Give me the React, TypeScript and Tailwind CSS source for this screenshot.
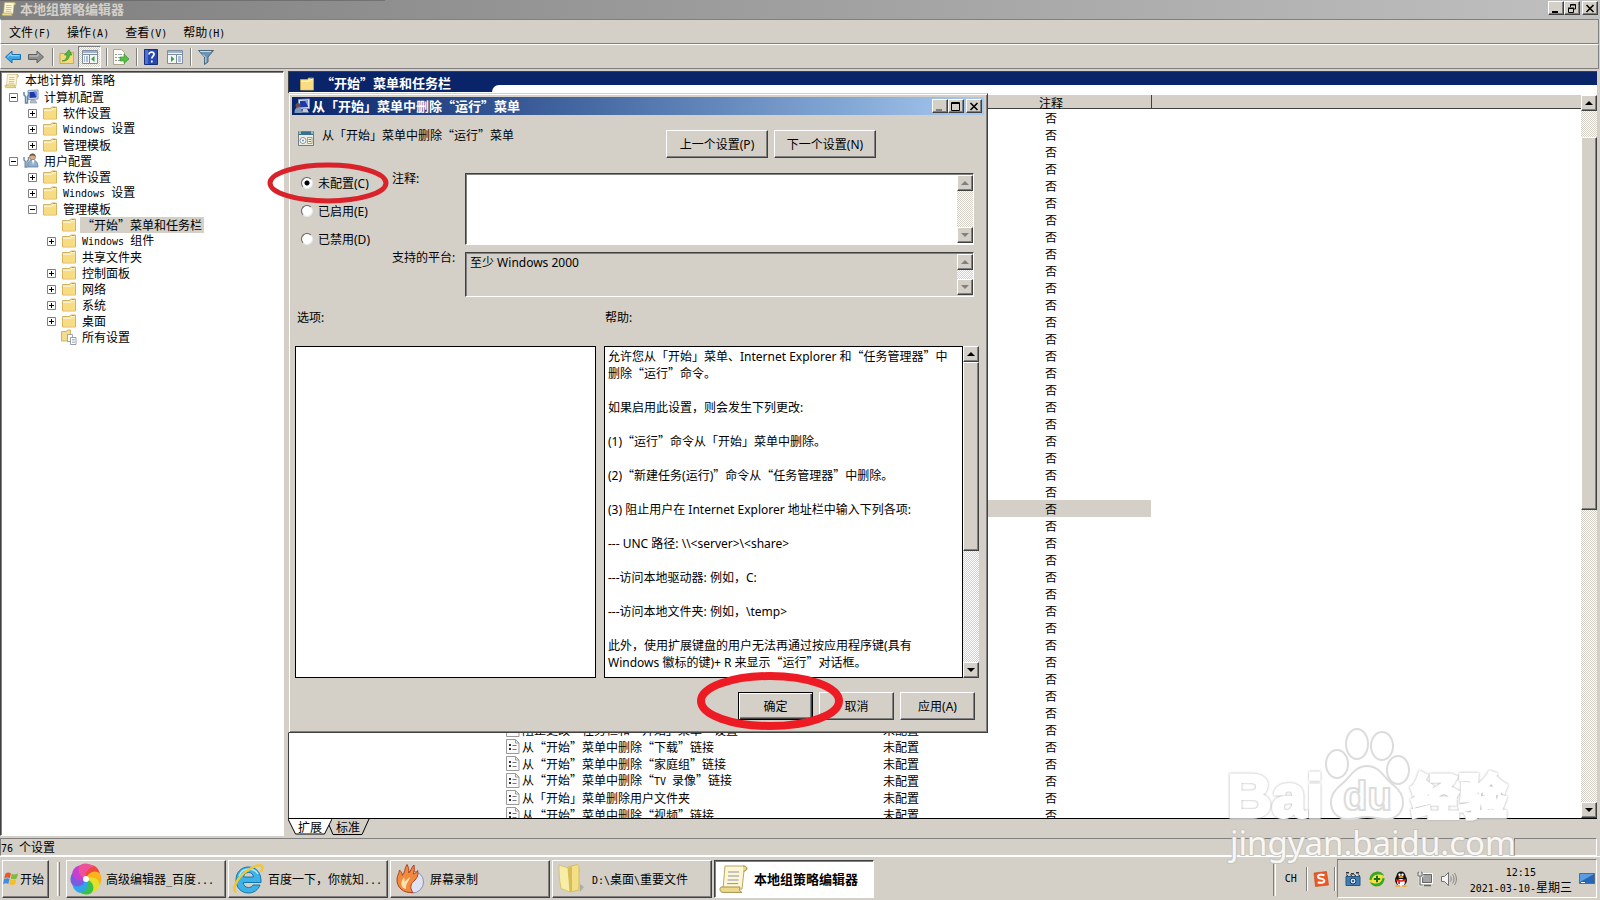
import { useState } from 'react';
import type { ReactNode } from 'react';

interface TreeItem {
  label: string;
  level: number;
  icon: ReactNode;
  state?: 'open' | 'closed';
  selected?: boolean;
}

interface SettingRow {
  name: string;
  status: string;
  comment: string;
}

const raised =
  'bg-[#d4d0c8] border border-t-white border-l-white border-r-[#404040] border-b-[#404040] shadow-[inset_-1px_-1px_0_#808080]';
const sunken =
  'border border-t-[#404040] border-l-[#404040] border-r-white border-b-white shadow-[inset_1px_1px_0_#808080]';
const track =
  'bg-[repeating-conic-gradient(#ffffff_0_25%,#d4d0c8_0_50%)] bg-[length:2px_2px]';

// Latin runs get their own face so the full-width quotes stay in the CJK font
function Mono({ text }: { text: string }) {
  return (
    <>
      {text.split(/([ -~]+)/).map((part, i) =>
        i % 2 ? (
          <span key={i} className="whitespace-pre text-[10px] [font-family:'DejaVu_Sans_Mono',monospace]">
            {part}
          </span>
        ) : (
          part
        )
      )}
    </>
  );
}

function Ui({ text }: { text: string }) {
  return (
    <>
      {text.split(/([ -~]+)/).map((part, i) =>
        i % 2 ? (
          <span key={i} className="whitespace-pre [font-family:'Noto_Sans',sans-serif]">
            {part}
          </span>
        ) : (
          part
        )
      )}
    </>
  );
}

function FolderIcon() {
  return (
    <svg viewBox="0 0 16 16" className="size-4 shrink-0">
      <path d="M1.500 3.500h7l1-1.500h5v12h-13z" fill="#fbe28c" stroke="#c9a648" strokeWidth=".8" />
      <path d="M2 6h12v7.500H2z" fill="#f8dc84" />
      <path d="M2 5.500h7.500l1.500-2h3" fill="none" stroke="#fff6cf" />
      <path d="M11 2.500h2.500" stroke="#8f9aa8" />
    </svg>
  );
}

function ScrollIcon({ className = 'size-4' }: { className?: string }) {
  return (
    <svg viewBox="0 0 16 16" className={`${className} shrink-0`}>
      <path d="M3.500 1.500h9.500c2 0 2 2.500 0 2.500L12 13H2.500z" fill="#fdf6d4" stroke="#b9a868" strokeWidth=".5" />
      <path d="M1.500 12h9.500c-.5 1.500 0 2.600 1 2.700H2.500c-1.600 0-1.900-2-1-2.700z" fill="#ecd98c" stroke="#a8944a" strokeWidth=".5" />
      <path d="M12.500 1.600c2.500-.3 2.200 2.600.2 2.400" fill="#ecd98c" stroke="#a8944a" strokeWidth=".5" />
      <path d="M5 4.500h5.500M5 6.500h5.500M4.800 8.500h5.500M4.600 10.300h5.500" stroke="#8d93a5" strokeWidth=".5" />
    </svg>
  );
}

function ComputerIcon() {
  return (
    <svg viewBox="0 0 16 16" className="size-4 shrink-0">
      <path d="M5 1.500l10-.5v9l-10 .5z" fill="#dbe3f2" stroke="#7182ab" strokeWidth=".8" />
      <path d="M6.500 3l7-.4v6l-7 .4z" fill="#1d38a8" />
      <path d="M11 3l2.500-.3v5.900z" fill="#6c8fe8" />
      <path d="M8 11h4l2 3H7z" fill="#b8c0cf" stroke="#77808f" strokeWidth=".5" />
      <path d="M1 3v3l1.500 1.500V14h2V7.500L6 6V3" fill="none" stroke="#5f87a8" strokeWidth="1.500" />
    </svg>
  );
}

function RemoteIcon() {
  return (
    <svg viewBox="0 0 16 16" className="size-4 shrink-0">
      <path d="M4.500 1.500L15.500 1v9.500l-11 .5z" fill="#dbe3f2" stroke="#8e9dc4" strokeWidth=".8" />
      <path d="M6 3l8-.5V9l-8 .5z" fill="#1d38a8" />
      <path d="M11 2.700l3-.2v6z" fill="#7d9cf0" />
      <path d="M9 11h4l2 3.500H8z" fill="#c6cbd6" />
      <circle cx="4" cy="7.500" r="2.500" fill="#6b4d4a" />
      <path d="M.5 15c0-4 1.500-5.500 3.700-5.500S8 11 8 15z" fill="#7f97b8" />
    </svg>
  );
}

function UserIcon() {
  return (
    <svg viewBox="0 0 16 16" className="size-4 shrink-0">
      <circle cx="9.500" cy="4" r="3" fill="#d7b08b" stroke="#7a6552" strokeWidth=".6" />
      <path d="M6.500 3.500c0-4 6.500-4 6 0-2-1.500-4-1.500-6 0z" fill="#6b5a4d" />
      <path d="M5 14c0-6 1.500-7 4.500-7s5.500 2 5.500 7z" fill="#8fb0d0" stroke="#55718f" strokeWidth=".7" />
      <path d="M9 7l1 5 1.500-5z" fill="#fff" />
      <path d="M1 4v3l1.200 1.300V14h1.800V8.300L5.500 7V4" fill="none" stroke="#6c8ea5" strokeWidth="1.400" />
    </svg>
  );
}

function AllSettingsIcon() {
  return (
    <svg viewBox="0 0 16 16" className="size-4 shrink-0">
      <path d="M.5 2.500h5l1-1.500h3v11h-9z" fill="#f5dc8c" stroke="#c9a648" strokeWidth=".8" />
      <path d="M6.500 5.500h5v7h-5z" fill="#fff" stroke="#8a93a0" strokeWidth=".8" />
      <path d="M9.500 8.500h5.500v7H9.500z" fill="#fff" stroke="#7d8794" strokeWidth=".8" />
      <path d="M11 10.500h2.800M11 12h2.800M11 13.500h2.800" stroke="#8fa0b5" strokeWidth=".7" />
    </svg>
  );
}

function WindowIcon({ flip = false }: { flip?: boolean }) {
  return (
    <svg viewBox="0 0 16 16" className="size-4">
      <path d="M.5 1.500h15v13H.5z" fill="#f4f6f8" stroke="#7b8ca3" />
      <path d="M1 2h14v2H1z" fill="#9fb2c8" />
      <path d="M1 5.500h14" stroke="#7b8ca3" />
      {flip ? (
        <>
          <path d="M9.500 6v8" stroke="#7b8ca3" />
          <path d="M4 7l3.500 3L4 13z" fill="#3f9f40" />
          <path d="M11 8h3M11 10h3M11 12h3" stroke="#6b88b5" />
        </>
      ) : (
        <>
          <path d="M7.500 6v8" stroke="#7b8ca3" />
          <path d="M12.500 7L9 10l3.500 3z" fill="#3f9f40" />
          <path d="M2 8h1M4 8h2M2 10h1M4 10h2M2 12h1M4 12h2" stroke="#5d82bc" />
        </>
      )}
    </svg>
  );
}

function DocIcon() {
  return (
    <svg viewBox="0 0 14 15" className="h-[15px] w-[14px] shrink-0">
      <path d="M.5.5h9l3.500 3.500v10.500H.5z" fill="#fafafa" stroke="#9a9a9a" />
      <path d="M9.500.5v3.500H13" fill="none" stroke="#9a9a9a" />
      <path d="M3 5h2v2H3zM3 9h2v2H3z" fill="#333" />
      <path d="M6.500 6.500h4M6.500 10.500h4" stroke="#777" />
    </svg>
  );
}

function PolicyIcon() {
  return (
    <svg viewBox="0 0 16 16" className="size-4 shrink-0">
      <path d="M.5 1.500h15v14H.5z" fill="#e9ede6" stroke="#6f7d86" />
      <path d="M1 2h14v3H1z" fill="#3b6f92" />
      <path d="M1 1h2v3H1zM13 1h2v3h-2z" fill="#88c4a8" />
      <circle cx="5" cy="10.500" r="3" fill="#fff" stroke="#8b9297" />
      <circle cx="5" cy="10.500" r=".9" fill="#5b7ea0" />
      <path d="M9.500 7.500h4.500v6H9.500z" fill="#fffbe0" stroke="#a0a67a" />
      <path d="M10.500 9.500h2.500M10.500 11.500h2.500" stroke="#6a8a3a" />
    </svg>
  );
}

function Arrow({ up = false, disabled = false }: { up?: boolean; disabled?: boolean }) {
  return (
    <svg viewBox="0 0 8 4" className="h-1 w-2">
      <path d={up ? 'M4 0l4 4H0z' : 'M0 0h8L4 4z'} fill={disabled ? '#808080' : '#000'} />
    </svg>
  );
}

function ScrollBar({ thumb, disabled = false }: { thumb?: string; disabled?: boolean }) {
  return (
    <div className={`flex w-4 shrink-0 flex-col ${track}`}>
      <button aria-label="向上滚动" disabled={disabled} className={`flex h-4 shrink-0 items-center justify-center ${raised}`}>
        <Arrow up disabled={disabled} />
      </button>
      <div className="min-h-0 flex-1">{thumb && <div className={`${thumb} ${raised}`} />}</div>
      <button aria-label="向下滚动" disabled={disabled} className={`flex h-4 shrink-0 items-center justify-center ${raised}`}>
        <Arrow disabled={disabled} />
      </button>
    </div>
  );
}

function WindowButtons({ restore = false }: { restore?: boolean }) {
  const cls = `flex h-[14px] w-4 items-center justify-center ${raised}`;
  return (
    <div className="flex">
      <button aria-label="最小化" className={cls}>
        <svg viewBox="0 0 10 9" className="h-[9px] w-[10px]">
          <path d="M1 7h6v2H1z" fill={restore ? '#000' : '#808080'} />
        </svg>
      </button>
      <button aria-label="最大化" className={cls}>
        <svg viewBox="0 0 10 9" className="h-[9px] w-[10px]" fill="none" stroke="#000">
          {restore ? (
            <path d="M3.500 3V.5h5v4.500H7M3 1h6M1.500 4.500h5v4h-5zM1 4h6" />
          ) : (
            <path d="M.5.5h8v8h-8zM0 1.500h9" />
          )}
        </svg>
      </button>
      <button aria-label="关闭" className={`ml-0.5 ${cls}`}>
        <svg viewBox="0 0 10 9" className="h-[9px] w-[10px]">
          <path d="M1.500 1l7 7M8.500 1l-7 7" stroke="#000" strokeWidth="1.600" />
        </svg>
      </button>
    </div>
  );
}

const tree: TreeItem[] = [
  { label: '本地计算机 策略', level: 0, icon: <ScrollIcon /> },
  { label: '计算机配置', level: 1, icon: <ComputerIcon />, state: 'open' },
  { label: '软件设置', level: 2, icon: <FolderIcon />, state: 'closed' },
  { label: 'Windows 设置', level: 2, icon: <FolderIcon />, state: 'closed' },
  { label: '管理模板', level: 2, icon: <FolderIcon />, state: 'closed' },
  { label: '用户配置', level: 1, icon: <UserIcon />, state: 'open' },
  { label: '软件设置', level: 2, icon: <FolderIcon />, state: 'closed' },
  { label: 'Windows 设置', level: 2, icon: <FolderIcon />, state: 'closed' },
  { label: '管理模板', level: 2, icon: <FolderIcon />, state: 'open' },
  { label: '“开始”菜单和任务栏', level: 3, icon: <FolderIcon />, selected: true },
  { label: 'Windows 组件', level: 3, icon: <FolderIcon />, state: 'closed' },
  { label: '共享文件夹', level: 3, icon: <FolderIcon /> },
  { label: '控制面板', level: 3, icon: <FolderIcon />, state: 'closed' },
  { label: '网络', level: 3, icon: <FolderIcon />, state: 'closed' },
  { label: '系统', level: 3, icon: <FolderIcon />, state: 'closed' },
  { label: '桌面', level: 3, icon: <FolderIcon />, state: 'closed' },
  { label: '所有设置', level: 3, icon: <AllSettingsIcon /> },
];

const indent = ['pl-[3px]', 'pl-[8px]', 'pl-[27px]', 'pl-[46px]'];

const names = [
  '阻止更改“任务栏和「开始」菜单”设置',
  '从“开始”菜单中删除“下载”链接',
  '从“开始”菜单中删除“家庭组”链接',
  '从“开始”菜单中删除“TV 录像”链接',
  '从「开始」菜单删除用户文件夹',
  '从“开始”菜单中删除“视频”链接',
];

const selectedRow = 23;
const rows: SettingRow[] = Array.from({ length: 42 }, (_, i) => ({
  name: names[i - 36] || '',
  status: i < 36 ? '' : '未配置',
  comment: '否',
}));

const helpLines = [
  '允许您从「开始」菜单、Internet Explorer 和“任务管理器”中',
  '删除“运行”命令。',
  '',
  '如果启用此设置，则会发生下列更改:',
  '',
  '(1)“运行”命令从「开始」菜单中删除。',
  '',
  '(2)“新建任务(运行)”命令从“任务管理器”中删除。',
  '',
  '(3) 阻止用户在 Internet Explorer 地址栏中输入下列各项:',
  '',
  '--- UNC 路径: \\\\<server>\\<share>',
  '',
  '---访问本地驱动器: 例如，C:',
  '',
  '---访问本地文件夹: 例如，\\temp>',
  '',
  '此外，使用扩展键盘的用户无法再通过按应用程序键(具有',
  'Windows 徽标的键)+ R 来显示“运行”对话框。',
];

function Toolbar() {
  const sep = <div className="h-[18px] w-0.5 border-l border-l-[#808080] bg-white" />;
  return (
    <div className="mr-px flex h-[25px] shrink-0 items-center border-r border-b border-l border-t border-t-white border-l-white border-r-[#808080] border-b-[#808080] pl-1">
      <button aria-label="后退" className="mr-[7px]">
        <svg viewBox="0 0 16 16" className="size-4">
          <path d="M.5 8L7 2v3.500h8.500v5H7V14z" fill="#39a5e8" stroke="#1b6fb0" />
          <path d="M2.500 8L6 4.700v2h8.500" fill="none" stroke="#a6dcff" />
        </svg>
      </button>
      <button aria-label="前进" className="mr-2">
        <svg viewBox="0 0 16 16" className="size-4">
          <path d="M15.500 8L9 2v3.500H.5v5H9V14z" fill="#8e8e8e" stroke="#5f5f5f" />
          <path d="M1.500 7H10V4.700" fill="none" stroke="#c8c8c8" />
        </svg>
      </button>
      {sep}
      <button aria-label="上一级" className="ml-[5px] mr-[3px]">
        <svg viewBox="0 0 16 16" className="size-4">
          <path d="M1 4.500h6l1-1h6.500v11H1z" fill="#f5d97a" stroke="#c19d3f" strokeWidth=".8" />
          <path d="M3 12c3.500-.5 5-3 5-6H5.500L10 .8 13 6h-2.500c0 4-3.500 6.500-7.500 6z" fill="#53b842" stroke="#2e8424" strokeWidth=".6" />
        </svg>
      </button>
      <button
        aria-label="显示/隐藏控制台树"
        className={`mr-[5px] flex h-[22px] w-[23px] items-center justify-center border border-t-[#808080] border-l-[#808080] border-r-white border-b-white ${track}`}
      >
        <WindowIcon />
      </button>
      {sep}
      <button aria-label="导出列表" className="ml-[5px] mr-[7px]">
        <svg viewBox="0 0 16 16" className="size-4">
          <path d="M.5.5h8l3 3v12H.5z" fill="#fffef4" stroke="#a9a88c" />
          <path d="M2.500 5.500h1M2.500 8.500h1M2.500 11.500h1" stroke="#333" />
          <path d="M5 5.500h4M5 8.500h3M5 11.500h4" stroke="#9aa4ae" />
          <path d="M7 8h4V5l5 5-5 4.500V12H7z" fill="#56bf48" stroke="#2f8a28" strokeWidth=".6" />
        </svg>
      </button>
      {sep}
      <button aria-label="帮助" className="ml-[5px] mr-2">
        <svg viewBox="0 0 16 16" className="size-4">
          <path d="M1.500.5h13v15h-13z" fill="#2748ad" stroke="#142d7c" />
          <path d="M2 1h3v14H2z" fill="#4c70d3" />
          <path d="M6 5.500c0-3.500 5.500-3 5 0-.3 1.600-2.200 1.800-2.200 4M8.800 11.500v2" fill="none" stroke="#fff" strokeWidth="1.700" />
        </svg>
      </button>
      <button aria-label="显示/隐藏操作窗格" className="mr-[7px]">
        <WindowIcon flip />
      </button>
      {sep}
      <button aria-label="筛选器" className="ml-1.5">
        <svg viewBox="0 0 16 16" className="size-4">
          <path d="M.5 1.500h15L10 8v5l-3.500 2.500V8z" fill="#6d93b3" stroke="#47687f" />
          <path d="M2 2.500h11M5 5.500l2.800 3v5" fill="none" stroke="#c6dcea" />
        </svg>
      </button>
    </div>
  );
}

function TreePane() {
  return (
    <nav className={`w-[284px] shrink-0 overflow-hidden bg-white pt-px ${sunken}`}>
      <ul>
        {tree.map((item, i) => (
          <li key={i} className={`flex h-4 items-center whitespace-nowrap ${indent[item.level]}`}>
            {item.level > 0 && (
              <span className="mr-[5px] flex size-[9px] shrink-0 items-center justify-center">
                {item.state && (
                  <svg viewBox="0 0 9 9" className="size-[9px]">
                    <path d="M.5.5h8v8h-8z" fill="#fff" stroke="#808080" />
                    <path d={item.state === 'open' ? 'M2 4.500h5' : 'M2 4.500h5M4.500 2v5'} stroke="#000" />
                  </svg>
                )}
              </span>
            )}
            {item.icon}
            <span className={`ml-[3px] px-0.5 leading-4 ${item.selected ? 'bg-[#d4d0c8]' : ''}`}>
              <Mono text={item.label} />
            </span>
          </li>
        ))}
      </ul>
    </nav>
  );
}

function SettingsPane() {
  return (
    <main className="mr-[3px] flex min-w-0 flex-1 flex-col">
      <section className="flex min-h-0 flex-1 flex-col border-t border-l border-t-[#404040] border-l-[#404040] border-b border-b-black bg-white">
        <div className="flex h-5 shrink-0 items-end bg-[#0a246a] pl-[10px] text-white">
          <FolderIcon />
          <h2 className="ml-1.5 text-[13px] leading-[18px] font-bold">“开始”菜单和任务栏</h2>
          <div className="ml-[41px] h-[7px] flex-1 rounded-tl-[7px] bg-white" />
        </div>
        <div className="mt-[3px] flex min-h-0 flex-1">
          <div className="w-[211px] shrink-0" />
          <div className="min-w-0 flex-1 overflow-hidden">
            <table className="w-full table-fixed border-collapse text-left">
              <colgroup>
                <col className="w-[377px]" />
                <col className="w-[162px]" />
                <col className="w-[112px]" />
                <col />
              </colgroup>
              <thead>
                <tr className="h-[14px] bg-[#d4d0c8] leading-[13px] shadow-[inset_0_-1px_0_#404040]">
                  <th className="p-0" />
                  <th className="p-0" />
                  <th className="border-r border-r-[#404040] p-0 font-normal">注释</th>
                  <th className="p-0" />
                </tr>
              </thead>
              <tbody>
                {rows.map((row, i) => {
                  const bg = i === selectedRow ? 'bg-[#d4d0c8]' : '';
                  return (
                    <tr key={i} className="h-[17px] leading-[17px] whitespace-nowrap">
                      <td className={`px-1.5 py-0 ${bg}`}>
                        {row.name && (
                          <div className="flex h-[17px] items-center gap-0.5">
                            <DocIcon />
                            <span>
                              <Mono text={row.name} />
                            </span>
                          </div>
                        )}
                      </td>
                      <td className={`px-1.5 py-0 ${bg}`}>{row.status}</td>
                      <td className={`px-1.5 py-0 ${bg}`}>{row.comment}</td>
                      <td className="p-0" />
                    </tr>
                  );
                })}
              </tbody>
            </table>
          </div>
          <ScrollBar thumb="mt-[26px] h-[54%]" />
        </div>
      </section>
      <div className="flex h-[17px] shrink-0">
        <button className="relative flex h-4 w-11 items-center justify-center">
          <svg viewBox="0 0 44 16" className="absolute inset-0 h-4 w-11">
            <path d="M0 0l7.500 15h29L44 0z" fill="#fff" />
            <path d="M0 0l7.500 15h29L44 0" fill="none" stroke="#000" />
          </svg>
          <span className="relative leading-4">扩展</span>
        </button>
        <button className="relative -ml-1 flex h-4 w-[42px] items-center justify-center pr-0.5">
          <svg viewBox="0 0 42 16" className="absolute inset-0 h-4 w-[42px]">
            <path d="M1 6l4 9.500h29L41 0" fill="none" stroke="#000" />
          </svg>
          <span className="relative leading-4">标准</span>
        </button>
      </div>
    </main>
  );
}

function PolicyDialog() {
  const [choice, setChoice] = useState('C');
  const [comment, setComment] = useState('');
  const options = [
    { key: 'C', label: '未配置(C)' },
    { key: 'E', label: '已启用(E)' },
    { key: 'D', label: '已禁用(D)' },
  ];

  return (
    <div
      role="dialog"
      aria-labelledby="dialog-title"
      className="absolute top-[93px] left-[288px] w-[700px] border border-t-[#d4d0c8] border-l-[#d4d0c8] border-r-[#404040] border-b-[#404040] bg-[#d4d0c8] p-[3px] pb-[12px] shadow-[inset_1px_1px_0_#fff,inset_-1px_-1px_0_#808080]"
    >
      <div className="flex h-[18px] items-center bg-linear-to-r from-[#0a246a] to-[#a6caf0] pr-0.5 pl-0.5 text-white">
        <RemoteIcon />
        <h1 id="dialog-title" className="ml-0.5 flex-1 text-[13px] leading-4 font-bold">
          从「开始」菜单中删除“运行”菜单
        </h1>
        <WindowButtons />
      </div>

      <div className="mt-[15px] mr-[108px] flex h-7 items-start gap-1.5 pl-1.5">
        <PolicyIcon />
        <p className="ml-0.5 flex-1 leading-[10px]">从「开始」菜单中删除“运行”菜单</p>
        <button className={`h-7 w-[102px] ${raised}`}>
          <Ui text="上一个设置(P)" />
        </button>
        <button className={`h-7 w-[102px] ${raised}`}>
          <Ui text="下一个设置(N)" />
        </button>
      </div>

      <div className="mt-[15px] mr-[10px] grid grid-cols-[91px_73px_1fr] gap-y-[7px] pl-[9px]">
        <div role="radiogroup" className="row-span-2 flex flex-col gap-2">
          {options.map((o) => (
            <label key={o.key} className="flex h-5 items-center gap-[5px] leading-5">
              <input
                type="radio"
                name="state"
                checked={choice === o.key}
                onChange={() => setChoice(o.key)}
                className="size-3 appearance-none rounded-full border border-t-[#606060] border-l-[#606060] border-r-[#e8e8e8] border-b-[#e8e8e8] bg-white checked:bg-[radial-gradient(circle,#000_2px,#fff_3px)]"
              />
              <span>
                <Ui text={o.label} />
              </span>
            </label>
          ))}
        </div>
        <label htmlFor="comment" className="leading-[10px]">
          <Ui text="注释:" />
        </label>
        <div className={`flex h-[72px] bg-white p-px pr-0 ${sunken}`}>
          <textarea
            id="comment"
            value={comment}
            onChange={(e) => setComment(e.target.value)}
            className="min-w-0 flex-1 resize-none px-1 outline-none"
          />
          <ScrollBar disabled />
        </div>
        <label htmlFor="platform" className="leading-[10px]">
          <Ui text="支持的平台:" />
        </label>
        <div className={`flex h-[45px] p-px pr-0 ${sunken}`}>
          <textarea
            id="platform"
            readOnly
            value="至少 Windows 2000"
            className="min-w-0 flex-1 resize-none overflow-hidden px-[3px] leading-[18px] outline-none [font-family:'Noto_Sans','Noto_Sans_CJK_SC',sans-serif]"
          />
          <ScrollBar disabled />
        </div>
      </div>

      <div className="mt-3 flex pl-[5px] leading-4">
        <p className="w-[308px]">
          <Ui text="选项:" />
        </p>
        <p>
          <Ui text="帮助:" />
        </p>
      </div>

      <div className="mt-5 mr-[5px] flex h-[332px] pl-[3px]">
        <div className="w-[301px] border border-black bg-white" />
        <div className="ml-2 min-w-0 flex-1 overflow-hidden border border-black bg-white px-[3px]">
          {helpLines.map((line, i) => (
            <p key={i} className="h-[17px] leading-[17px] whitespace-nowrap">
              <Ui text={line} />
            </p>
          ))}
        </div>
        <ScrollBar thumb="h-[63%]" />
      </div>

      <div className="mt-[14px] mr-[9px] flex justify-end gap-1.5">
        <button className="h-7 w-[75px] border border-black bg-[#d4d0c8] shadow-[inset_1px_1px_0_#fff,inset_-1px_-1px_0_#404040,inset_-2px_-2px_0_#808080]">
          确定
        </button>
        <button className={`h-7 w-[75px] ${raised}`}>取消</button>
        <button className={`h-7 w-[75px] ${raised}`}>
          <Ui text="应用(A)" />
        </button>
      </div>
    </div>
  );
}

function PinwheelIcon() {
  const petals = ['#f04a3c', '#fbb31c', '#e7e02a', '#3cc04c', '#2fa4ea', '#7a5be0', '#c63fd2', '#f0509a'];
  return (
    <svg viewBox="0 0 32 32" className="size-8 shrink-0">
      {petals.map((fill, i) => (
        <path key={fill} d="M16 16C15 9 20 3 27 5.500c4 3 4.500 8 3.500 12C27 13 21 12 16 16z" fill={fill} transform={`rotate(${i * 45 - 20} 16 16)`} />
      ))}
      <circle cx="16" cy="16" r="3" fill="#fff" />
    </svg>
  );
}

function IeIcon() {
  return (
    <svg viewBox="0 0 32 32" className="size-8 shrink-0">
      <path d="M16.500 4C9 4 4 9.500 4 17s5 13 12.500 13c5.500 0 9.500-3 11.500-8h-7c-1 1.800-2.500 2.500-4.500 2.500-3 0-5-2-5.200-5H29C29.500 10 24.500 4 16.500 4zm-5 10c.6-3 2.400-4.500 5-4.500S21 11 21.500 14z" fill="#3bb3e8" stroke="#1673ac" />
      <path d="M7 13c1.500-4 5-7 10-7 4 0 7 1.500 9 5" fill="none" stroke="#b3e8fc" strokeWidth="1.500" />
      <path d="M4.500 29C-1 28 4 16 14 8.500 22 2.500 30 .5 30.500 4c.2 1.500-.5 3.500-1.500 5" fill="none" stroke="#f3c52e" strokeWidth="2.400" />
    </svg>
  );
}

function FlameIcon() {
  return (
    <svg viewBox="0 0 32 32" className="size-8 shrink-0">
      <circle cx="18.500" cy="19" r="11" fill="#dfe2f0" stroke="#8b8fae" />
      <path d="M19 29.500C9 30.500 2.500 24 3 16c.3-3.500 2-5.500 2.500-9 2 2 2.800 3.500 2.800 5.500C11 10 10.500 5 13 1.500c1.500 3 2.200 5 1.700 8.500C17 8 17 5 20 2c.5 4 .4 6-.6 9 2-.5 3.200-1.500 4.200-3.500 1.400 6-1.600 8.500-5.100 12-2.500 3-2 7 .5 10z" fill="#f28a3c" stroke="#a8402a" />
      <path d="M9 25c-3-4-1.500-8 1-10.500 1 2 .8 3 .5 4.500 2-2 3.500-3.500 5.500-5-.5 4-4.500 6-4 12z" fill="#fde0b0" />
    </svg>
  );
}

function OpenFolderIcon() {
  return (
    <svg viewBox="0 0 32 32" className="size-8 shrink-0">
      <path d="M24 29l4-5-4-3z" fill="#8b8b7a" opacity=".5" />
      <path d="M12 4l9-2.500 2 2V27l-9 2z" fill="#f2df88" stroke="#cdb552" strokeWidth=".8" />
      <path d="M3 2l9 3 2 24-9-3.500C3.500 18 3 10 3 2z" fill="#f8eda6" stroke="#d2bd62" strokeWidth=".8" />
      <path d="M12 5l4-1.500V28l-2 1z" fill="#d8bd52" />
    </svg>
  );
}

function StartIcon() {
  return (
    <svg viewBox="0 0 16 16" className="size-4 shrink-0">
      <path d="M2.500 2.500C4.500 1 6.500 1.500 8 2.500L6.800 7.300C5.200 6.300 3.200 6.200 1.200 7.500z" fill="#e8562a" />
      <path d="M8.800 2.700c1.800 1 4 1 6.200-.4L13.800 7.200c-2 1.400-4 1.300-6 .3z" fill="#7cbb3c" />
      <path d="M1 8.300c2-1.300 4-1.200 5.600-.2L5.300 13c-1.600-1-3.500-1-5.300.2z" fill="#3f8fdd" />
      <path d="M7.500 8.300c1.900 1 4 1.100 6 0L12.300 13c-2 1.400-4.200 1.300-6.100.3z" fill="#f6bd2c" />
    </svg>
  );
}

function Taskbar() {
  const tasks = [
    { label: '高级编辑器_百度...', icon: <PinwheelIcon /> },
    { label: '百度一下，你就知...', icon: <IeIcon /> },
    { label: '屏幕录制', icon: <FlameIcon /> },
    { label: 'D:\\桌面\\重要文件', icon: <OpenFolderIcon /> },
    { label: '本地组策略编辑器', icon: <ScrollIcon className="size-8" />, active: true },
  ];
  return (
    <footer className="flex h-11 shrink-0 items-center border-t border-t-white pl-0.5">
      <button className={`flex h-[38px] w-[47px] items-center gap-px ${raised}`}>
        <StartIcon />
        <span>开始</span>
      </button>
      <div className="mr-1.5 ml-2 h-[34px] w-[3px] border-l border-r border-l-white border-r-[#808080]" />
      <div className="flex gap-0.5">
        {tasks.map((t) => (
          <button
            key={t.label}
            className={
              t.active
                ? `flex h-[38px] w-40 items-center gap-1 bg-white pl-[3px] text-[13px] font-bold whitespace-nowrap ${sunken}`
                : `flex h-[38px] w-40 items-center gap-1 pl-[3px] whitespace-nowrap ${raised}`
            }
          >
            {t.icon}
            <span>
              <Mono text={t.label} />
            </span>
          </button>
        ))}
      </div>
      <div className="ml-auto h-[34px] w-[3px] border-r border-l border-l-[#808080] border-r-white" />
      <span className="mx-[9px] pb-1">
        <Mono text="CH" />
      </span>
      <div className="h-6 w-0.5 border-l border-l-[#808080] bg-white" />
      <svg viewBox="0 0 16 16" className="mx-[5px] size-4">
        <path d="M1 2l12.500-1.500L15.500 14 2.500 15.500z" fill="#ee5a24" stroke="#c63f12" strokeWidth=".6" />
        <path d="M11.500 4.200C9 3.200 5 3.500 5 5.700c0 2.500 6.300 1.300 6.300 4 0 2.200-4 2.500-6.500 1.500" fill="none" stroke="#fff" strokeWidth="2" />
      </svg>
      <div className="h-6 w-0.5 border-l border-l-[#808080] bg-white" />
      <div className="mr-[3px] ml-px flex h-[39px] items-center border border-t-[#808080] border-l-[#808080] border-r-white border-b-white pr-px pl-[7px]">
        <div className="flex gap-2">
          <svg viewBox="0 0 16 16" className="size-4">
            <path d="M1 1h3v1.500H1zM6 2h3v1.500H6zM11 1h3v1.500h-3z" fill="#333" />
            <path d="M1 5.500h14v9H1z" fill="#3f7fb8" stroke="#27567f" />
            <path d="M1 3.500l2 1.500M5 3.500l2 1.500M9 3.500l2 1.500M13 3.500l2 1.500" stroke="#333" />
            <circle cx="8" cy="10" r="3" fill="#cfe3f5" stroke="#173a5c" />
            <circle cx="8" cy="10" r="1" fill="#173a5c" />
          </svg>
          <svg viewBox="0 0 16 16" className="size-4">
            <circle cx="8" cy="8" r="7.500" fill="#f7d920" />
            <path d="M.5 9C.5 4 4 .5 9 .5c3 .2 5 1.700 6.200 4.200C11 2.500 5 3 3 9z" fill="#39a52f" />
            <path d="M15.500 7c0 5-3.500 8.500-8.500 8.500C4 15.300 2 13.500.8 11c4.200 2.500 10.200 2 12.200-4z" fill="#39a52f" />
            <path d="M2.800 8.500C3.500 4 8 2.500 12 4.500l1.300 3C12.500 12 8 13.500 4 11.800z" fill="#f7e24a" />
            <path d="M8 4.800v6.400M4.800 8h6.400" stroke="#17701a" strokeWidth="2" />
          </svg>
          <svg viewBox="0 0 16 16" className="size-4">
            <ellipse cx="8" cy="9" rx="6" ry="6" fill="#111" />
            <ellipse cx="8" cy="5" rx="4.500" ry="4.500" fill="#111" />
            <ellipse cx="8" cy="11.500" rx="3.800" ry="3.500" fill="#fff" />
            <circle cx="6.500" cy="3.700" r="1.200" fill="#fff" />
            <circle cx="9.500" cy="3.700" r="1.200" fill="#fff" />
            <ellipse cx="8" cy="6" rx="2.600" ry=".9" fill="#f7a51c" />
            <path d="M3 8c3 1.500 7 1.500 10 0v1.800c-2 .8-4 1-6 .9V13H5.200v-2.500L3 9.800z" fill="#dd2222" />
            <path d="M2 14.500h5v1.300H2.500zM9 14.500h5l-.5 1.300H9z" fill="#f7a51c" />
          </svg>
          <svg viewBox="0 0 16 16" className="size-4">
            <path d="M4.500 2.500h11v10h-11z" fill="#b5b5b5" stroke="#fff" />
            <path d="M5.500 3.500h9v8h-9z" fill="#a4a4a4" stroke="#555" strokeWidth=".8" />
            <path d="M7 14.500h7" stroke="#666" strokeWidth="1.500" />
            <path d="M1 1v4h4V1M3 5v9h3M1 1h1M4 1h1" fill="none" stroke="#fff" strokeWidth="2.400" />
            <path d="M1 1v4h4V1M3 5v9h3M1 1h1M4 1h1" fill="none" stroke="#666" strokeWidth="1.200" />
          </svg>
          <svg viewBox="0 0 16 16" className="size-4">
            <path d="M.5 5.500h3L7.500 1.500v13l-4-4h-3z" fill="#f3f3f3" stroke="#707070" />
            <path d="M9.500 5.500c1 1.500 1 3.500 0 5M11.500 3.500c2 2.500 2 6.500 0 9M13.500 2c2.500 3.500 2.500 8.500 0 12" fill="none" stroke="#808080" />
          </svg>
        </div>
        <div className="ml-[13px] text-center leading-4 whitespace-nowrap">
          <p className="h-4">
            <Mono text="12:15" />
          </p>
          <p className="h-4">
            <Mono text="2021-03-10-星期三" />
          </p>
        </div>
        <svg viewBox="0 0 16 16" className="ml-[7px] size-4">
          <path d="M.5 2.500h15v10H.5z" fill="#2566b8" stroke="#5a6c80" />
          <path d="M1 3h14L1 11z" fill="#5c9ce0" />
          <path d="M2 11.500h4" stroke="#fff" />
        </svg>
      </div>
    </footer>
  );
}

function Watermark() {
  return (
    <svg viewBox="0 0 300 150" className="pointer-events-none absolute right-[80px] bottom-[28px] h-[150px] w-[300px]">
      <g fill="#fff" stroke="#fff" strokeWidth="3" className="drop-shadow-[0_0_1px_#aaaaaa]">
        <text x="7" y="95" fontSize="62" fontWeight="700" className="[font-family:'Liberation_Sans',sans-serif]">
          Bai
        </text>
        <text x="191" y="92" fontSize="48" fontWeight="900" className="[font-family:'Noto_Sans_CJK_SC',sans-serif]">
          经验
        </text>
      </g>
      <g fill="#fff" stroke="#dcdcdc" strokeWidth="2">
        <ellipse cx="117" cy="42" rx="11" ry="14" />
        <ellipse cx="137" cy="22" rx="11" ry="15" />
        <ellipse cx="162" cy="24" rx="11" ry="14" />
        <ellipse cx="178" cy="48" rx="11" ry="14" />
        <path d="M147 44c-12 0-16 10-24 17-8 6-13 12-12 21 1 10 8 15 17 15 7 0 12-2 19-2s12 2 19 2c9 0 16-5 17-15 1-9-4-15-12-21-8-7-12-17-24-17z" />
        <text x="123" y="88" fontSize="40" fontWeight="700" className="[font-family:'Liberation_Sans',sans-serif]">
          du
        </text>
      </g>
      <text
        x="10"
        y="133"
        fontSize="33"
        fill="#f8f7f5"
        stroke="#c6c3bc"
        strokeWidth="2"
        paintOrder="stroke"
        className="[font-family:'Noto_Sans',sans-serif]"
      >
        jingyan.baidu.com
      </text>
    </svg>
  );
}

export default function App() {
  const menus = ['文件(F)', '操作(A)', '查看(V)', '帮助(H)'];
  return (
    <div
      lang="zh-CN"
      className="relative flex h-screen flex-col overflow-hidden bg-[#d4d0c8] text-[12px] text-black [font-family:'Noto_Sans_CJK_SC',sans-serif]"
    >
      <header className="flex h-[19px] shrink-0 items-start bg-linear-to-r from-[#808080] to-[#c0c0c0] pt-px pr-0.5 pl-px text-[#d4d0c8]">
        <ScrollIcon />
        <span className="ml-[3px] flex-1 text-[13px] leading-4 font-bold">本地组策略编辑器</span>
        <WindowButtons restore />
      </header>
      <div className="mr-px flex h-[25px] shrink-0 items-center gap-4 border border-t-[#808080] border-l-white border-r-[#808080] border-b-[#808080] pl-2">
        {menus.map((m) => (
          <button key={m}>
            <Mono text={m} />
          </button>
        ))}
      </div>
      <Toolbar />

      <div className="mt-0.5 flex min-h-0 flex-1 gap-1">
        <TreePane />
        <SettingsPane />
      </div>

      <div className="mt-0.5 mr-[3px] flex h-[18px] shrink-0 gap-0.5 leading-4">
        <p className="flex-1 border border-t-[#808080] border-l-[#808080] border-r-white border-b-white">
          <Mono text="76 个设置" />
        </p>
        <p className="w-[83px] border border-t-[#808080] border-l-[#808080] border-r-white border-b-white" />
      </div>
      <Taskbar />

      <PolicyDialog />
      <Watermark />

      <svg className="pointer-events-none absolute top-0 left-0 h-full w-full" fill="none">
        <ellipse cx="328" cy="183" rx="58" ry="18" stroke="#d9222a" strokeWidth="5" />
        <ellipse cx="770" cy="701" rx="69" ry="25" stroke="#ed1c24" strokeWidth="8" />
        <path d="M0 0h385" stroke="#555" strokeWidth="2" opacity=".5" />
      </svg>
    </div>
  );
}
